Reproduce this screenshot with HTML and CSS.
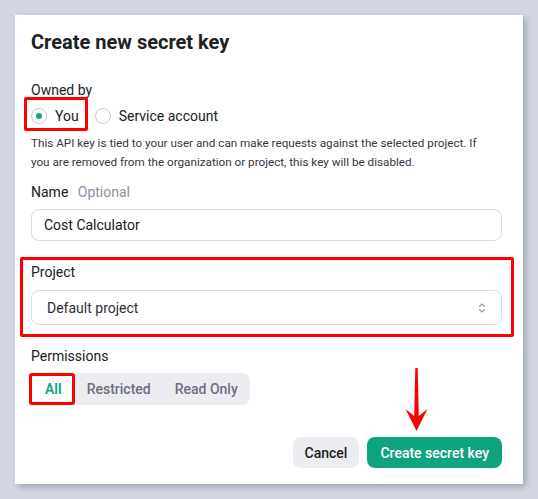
FILE: index.html
```html
<!DOCTYPE html>
<html lang="en">
<head>
<meta charset="utf-8">
<title>Create new secret key</title>
<link rel="stylesheet" href="styles.css">
</head>
<body>
<div class="page">
  <div class="card">
    <h1 class="title">Create new secret key</h1>

    <div class="label owned">Owned by</div>
    <div class="radios">
      <label class="radio annot-you"><span class="circle on"><span class="dot"></span></span>You</label>
      <label class="radio"><span class="circle"></span>Service account</label>
    </div>
    <p class="help">This API key is tied to your user and can make requests against the selected project. If you are removed from the organization or project, this key will be disabled.</p>

    <div class="label name-label">Name <span class="optional">Optional</span></div>
    <div class="input">Cost Calculator</div>

    <div class="project annot-project">
      <div class="label">Project</div>
      <div class="select">
        <span>Default project</span>
        <svg class="chev" width="10" height="14" viewBox="0 0 10 14" aria-hidden="true">
          <path d="M2.5 5.5 L5 3 L7.5 5.5 M2.5 8.5 L5 11 L7.5 8.5" fill="none" stroke="#9a9aab" stroke-width="1.1" stroke-linecap="round" stroke-linejoin="round"/>
        </svg>
      </div>
    </div>

    <div class="label perm-label">Permissions</div>
    <div class="segment">
      <span class="tab active annot-all">All</span>
      <span class="tab">Restricted</span>
      <span class="tab">Read Only</span>
    </div>

    <div class="footer">
      <button class="btn btn-cancel">Cancel</button>
      <button class="btn btn-primary">Create secret key</button>
    </div>

    <svg class="arrow" width="23" height="63" viewBox="0 0 23 63" aria-hidden="true">
      <path d="M10.3 0 L12.7 0 L13.8 48 L22.5 41 L11.5 63 L0.5 41 L9.2 48 Z" fill="#ff0000"/>
    </svg>
  </div>
</div>
</body>
</html>
```

FILE: styles.css
```css
html, body {
  margin: 0;
  padding: 0;
}

body {
  background: #d1d6e0;
  font-family: Roboto, "Liberation Sans", Arial, sans-serif;
  color: #202123;
}

.page {
  padding: 15px;
}

.card {
  position: relative;
  width: 508px;
  height: 469px;
  box-sizing: border-box;
  background: #ffffff;
  box-shadow: 3px 3px 6px rgba(40, 50, 75, 0.28);
  padding: 15px 21px 16px 16px;
  display: flex;
  flex-direction: column;
}

.title {
  margin: 0;
  font-size: 20px;
  line-height: 24px;
  font-weight: 700;
  color: #202123;
}

.label {
  font-size: 14px;
  line-height: 20px;
  font-weight: 400;
  color: #202123;
}

.owned {
  margin-top: 26px;
}

.radios {
  margin-top: 6px;
  display: flex;
  align-items: center;
  gap: 16px;
  height: 20px;
}

.radio {
  position: relative;
  display: flex;
  align-items: center;
  gap: 8px;
  font-size: 14px;
  line-height: 20px;
  color: #202123;
}

.circle {
  width: 16px;
  height: 16px;
  box-sizing: border-box;
  border: 1px solid #c8c8d2;
  border-radius: 50%;
  display: flex;
  align-items: center;
  justify-content: center;
}

.dot {
  width: 6px;
  height: 6px;
  border-radius: 50%;
  background: #10a37f;
}

.annot-you::after {
  content: "";
  position: absolute;
  top: -9px;
  bottom: -5px;
  left: -7px;
  right: -9px;
  border: 3px solid #ff0000;
  border-radius: 2px;
}

.help {
  margin: 8px 0 0;
  max-width: 452px;
  font-size: 11.7px;
  line-height: 19px;
  color: #353740;
}

.name-label {
  margin-top: 10px;
}

.optional {
  margin-left: 6px;
  font-weight: 400;
  color: #8e8ea0;
}

.input {
  margin-top: 7px;
  height: 32px;
  box-sizing: border-box;
  border: 1px solid #dcdce3;
  border-radius: 8px;
  padding: 0 12px;
  display: flex;
  align-items: center;
  font-size: 14px;
  color: #202123;
}

.project {
  position: relative;
  margin-top: 21px;
}

.annot-project::after {
  content: "";
  position: absolute;
  top: -5px;
  bottom: -12px;
  left: -11px;
  right: -12px;
  border: 3px solid #ff0000;
  border-radius: 2px;
}

.select {
  margin-top: 8px;
  height: 35px;
  box-sizing: border-box;
  border: 1px solid #dcdce3;
  border-radius: 8px;
  padding: 0 14px 0 15px;
  display: flex;
  align-items: center;
  justify-content: space-between;
  font-size: 14px;
  color: #2d2e35;
}

.chev {
  display: block;
}

.perm-label {
  margin-top: 21px;
}

.segment {
  margin-top: 7px;
  align-self: flex-start;
  height: 32px;
  display: flex;
  background: #ececf1;
  border-radius: 8px;
  margin-left: -2px;
}

.tab {
  position: relative;
  display: flex;
  align-items: center;
  padding: 0 12px;
  font-size: 14px;
  font-weight: 500;
  color: #6e6e80;
}

.tab.active {
  padding: 0 13px 0 16px;
  background: #ffffff;
  border-radius: 6px;
  color: #10a37f;
  font-weight: 600;
}

.annot-all::after {
  content: "";
  position: absolute;
  inset: 0;
  border: 3px solid #ff0000;
  border-radius: 3px;
}

.footer {
  margin-top: 32px;
  display: flex;
  justify-content: flex-end;
  gap: 8px;
}

.btn {
  height: 31px;
  border: none;
  border-radius: 8px;
  padding: 0 12px;
  font-family: inherit;
  font-size: 14px;
  font-weight: 500;
  cursor: pointer;
}

.btn-cancel {
  background: #ececf1;
  color: #202123;
}

.btn-primary {
  background: #10a37f;
  color: #ffffff;
  padding: 0 13px;
}

.arrow {
  position: absolute;
  left: 390px;
  top: 353px;
}
```
